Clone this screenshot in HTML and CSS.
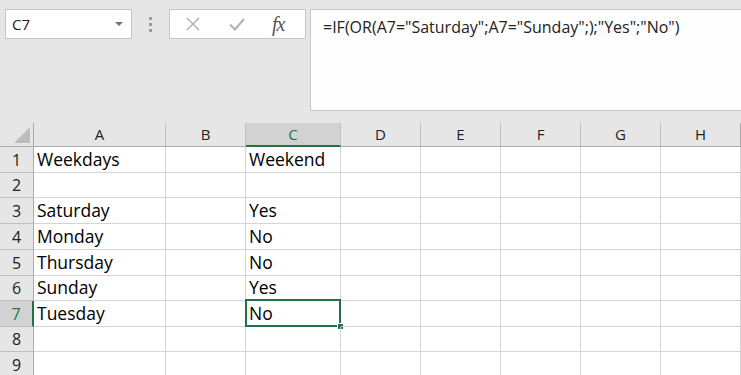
FILE: index.html
```html
<!DOCTYPE html>
<html>
<head>
<meta charset="utf-8">
<title>Sheet</title>
<link rel="stylesheet" href="styles.css">
</head>
<body>

<div class="bar">
	<div class="namebox">
		<span class="ref">C7</span>
		<span class="caret"></span>
	</div>
	<div class="grip"><i></i><i></i><i></i></div>
	<div class="fnbtns">
		<svg class="ico" width="16" height="16" viewBox="0 0 16 16"><path d="M2 2 L14 14 M14 2 L2 14" stroke="#ababab" stroke-width="1.3" fill="none"/></svg>
		<svg class="ico" width="18" height="16" viewBox="0 0 18 16"><path d="M2 8.5 L7 13.5 L16 3" stroke="#b0b0b0" stroke-width="2" fill="none"/></svg>
		<span class="fx">fx</span>
	</div>
	<div class="formula">=IF(OR(A7="Saturday";A7="Sunday";);"Yes";"No")</div>
</div>

<div class="sheet">
	<div class="corner"><span class="tri"></span></div>
	<div class="colhead">A</div>
	<div class="colhead">B</div>
	<div class="colhead sel">C</div>
	<div class="colhead">D</div>
	<div class="colhead">E</div>
	<div class="colhead">F</div>
	<div class="colhead">G</div>
	<div class="colhead last">H</div>

	<div class="rowhead">1</div>
	<div class="cell">Weekdays</div><div class="cell"></div><div class="cell">Weekend</div><div class="cell"></div><div class="cell"></div><div class="cell"></div><div class="cell"></div><div class="cell"></div>

	<div class="rowhead">2</div>
	<div class="cell"></div><div class="cell"></div><div class="cell"></div><div class="cell"></div><div class="cell"></div><div class="cell"></div><div class="cell"></div><div class="cell"></div>

	<div class="rowhead">3</div>
	<div class="cell">Saturday</div><div class="cell"></div><div class="cell">Yes</div><div class="cell"></div><div class="cell"></div><div class="cell"></div><div class="cell"></div><div class="cell"></div>

	<div class="rowhead">4</div>
	<div class="cell">Monday</div><div class="cell"></div><div class="cell">No</div><div class="cell"></div><div class="cell"></div><div class="cell"></div><div class="cell"></div><div class="cell"></div>

	<div class="rowhead">5</div>
	<div class="cell">Thursday</div><div class="cell"></div><div class="cell">No</div><div class="cell"></div><div class="cell"></div><div class="cell"></div><div class="cell"></div><div class="cell"></div>

	<div class="rowhead">6</div>
	<div class="cell">Sunday</div><div class="cell"></div><div class="cell">Yes</div><div class="cell"></div><div class="cell"></div><div class="cell"></div><div class="cell"></div><div class="cell"></div>

	<div class="rowhead sel">7</div>
	<div class="cell">Tuesday</div><div class="cell"></div><div class="cell active">No</div><div class="cell"></div><div class="cell"></div><div class="cell"></div><div class="cell"></div><div class="cell"></div>

	<div class="rowhead">8</div>
	<div class="cell"></div><div class="cell"></div><div class="cell"></div><div class="cell"></div><div class="cell"></div><div class="cell"></div><div class="cell"></div><div class="cell"></div>

	<div class="rowhead">9</div>
	<div class="cell"></div><div class="cell"></div><div class="cell"></div><div class="cell"></div><div class="cell"></div><div class="cell"></div><div class="cell"></div><div class="cell"></div>
</div>

</body>
</html>
```

FILE: styles.css
```css
html, body {
	margin: 0;
	padding: 0;
	width: 741px;
	height: 375px;
	overflow: hidden;
}

body {
	background: #e6e6e6;
	font-family: "Open Sans", "Noto Sans", sans-serif;
	color: #000;
}

/* formula bar */
.bar {
	display: flex;
	align-items: flex-start;
	height: 123px;
	box-sizing: border-box;
	padding: 9px 0 0 5px;
}

.namebox {
	width: 127px;
	height: 30px;
	box-sizing: border-box;
	background: #fff;
	border: 1px solid #c6c6c6;
	display: flex;
	align-items: center;
	justify-content: space-between;
	padding: 0 8px 0 6px;
}

.ref {
	font-size: 15px;
	color: #222;
}

.caret {
	width: 0;
	height: 0;
	border-left: 4px solid transparent;
	border-right: 4px solid transparent;
	border-top: 4px solid #707070;
}

.grip {
	width: 3px;
	margin: 8px 17px 0 17px;
	display: flex;
	flex-direction: column;
	gap: 3px;
}

.grip i {
	display: block;
	width: 3px;
	height: 3px;
	background: #9a9a9a;
}

.fnbtns {
	width: 137px;
	height: 30px;
	box-sizing: border-box;
	background: #fff;
	border: 1px solid #c6c6c6;
	display: flex;
	align-items: center;
	padding: 0 0 0 15px;
}

.ico {
	display: block;
}

.ico + .ico {
	margin-left: 27px;
}

.fx {
	margin-left: 26px;
	font-family: "Liberation Serif", serif;
	font-style: italic;
	font-size: 20px;
	color: #555;
	letter-spacing: -1px;
}

.formula {
	flex: 1;
	margin-left: 4px;
	height: 102px;
	box-sizing: border-box;
	background: #fefefe;
	border: 1px solid #c6c6c6;
	border-right: 0;
	padding: 6px 0 0 12px;
	font-size: 16px;
	line-height: 22px;
	color: #222;
}

/* grid */
.sheet {
	display: grid;
	grid-template-columns: 34px 132px 80px 95px 80px 80px 80px 80px 80px;
	grid-template-rows: 24px 26px 25px 26px 26px 26px 25px 26px 25px 26px;
	background: #fff;
}

.corner {
	background: #e6e6e6;
	border-right: 1px solid #ababab;
	border-bottom: 1px solid #ababab;
	position: relative;
}

.tri {
	position: absolute;
	right: 3px;
	bottom: 3px;
	width: 0;
	height: 0;
	border-left: 16px solid transparent;
	border-bottom: 16px solid #bcbcbc;
}

.colhead {
	background: #e6e6e6;
	border-right: 1px solid #c0c0c0;
	border-bottom: 1px solid #ababab;
	font-size: 15px;
	color: #222;
	text-align: center;
	line-height: 23px;
}

.colhead.last {
	border-right-color: #ababab;
}

.colhead.sel {
	background: #d2d2d2;
	color: #217346;
	border-bottom: 2px solid #217346;
	line-height: 22px;
}

.rowhead {
	background: #e6e6e6;
	border-right: 1px solid #ababab;
	border-bottom: 1px solid #c0c0c0;
	font-size: 16px;
	color: #222;
	display: flex;
	align-items: center;
	justify-content: center;
	line-height: 20px;
}

.rowhead.sel {
	background: #d2d2d2;
	color: #217346;
	border-right: 2px solid #217346;
}

.cell {
	border-right: 1px solid #d4d4d4;
	border-bottom: 1px solid #d4d4d4;
	font-size: 17.5px;
	line-height: 24px;
	padding: 0 0 1px 3px;
	display: flex;
	align-items: flex-end;
	white-space: nowrap;
	position: relative;
}

/* selected cell frame and fill handle */
.cell.active::before {
	content: "";
	position: absolute;
	top: -2px;
	left: -1px;
	right: -1px;
	bottom: -1px;
	border: 2px solid #217346;
}

.cell.active::after {
	content: "";
	position: absolute;
	right: -4px;
	bottom: -4px;
	width: 5px;
	height: 5px;
	background: #217346;
	border: 1px solid #fff;
}
```
